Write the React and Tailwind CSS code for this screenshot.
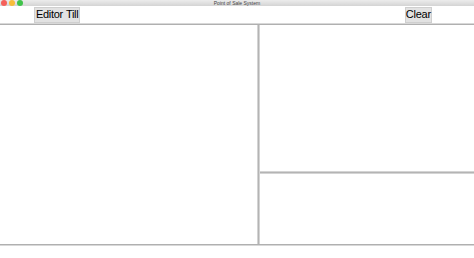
export default function App() {
  return (
    <div className="w-[474px] h-[258px] bg-white flex flex-col overflow-hidden" style={{ fontFamily: '"Liberation Sans", Arial, sans-serif' }}>
      {/* title bar */}
      <div className="relative h-[6px] bg-gradient-to-b from-[#ececec] to-[#d4d4d4] flex items-center">
        <div className="flex gap-[2px] pl-[1px]">
          <span className="w-[6px] h-[6px] rounded-full bg-[#f5605a]" />
          <span className="w-[6px] h-[6px] rounded-full bg-[#f8bd3a]" />
          <span className="w-[6px] h-[6px] rounded-full bg-[#3fc34a]" />
        </div>
        <div className="absolute inset-0 flex items-center justify-center text-[5px] leading-none text-[#444]">Point of Sale System</div>
      </div>
      {/* toolbar */}
      <div className="h-[17px] flex items-center pl-[34px] pr-[42px]">
        <div className="flex h-[16px] items-center bg-[#e2e2e2] border border-[#cfcfcf]">
          <button className="pl-[1px] pr-[3px] text-[11px] leading-none tracking-[-0.3px] text-black">Editor</button>
          <button className="pr-[1px] text-[11px] leading-none tracking-[-0.3px] text-black">Till</button>
        </div>
        <div className="flex-1" />
        <button className="h-[16px] px-0 bg-[#e2e2e2] border border-[#cfcfcf] text-[11px] leading-none tracking-[-0.2px] text-black">Clear</button>
      </div>
      {/* main */}
      <div className="h-[2px] bg-[#b0b0b0] border-t border-[#d8d8d8]" />
      <div className="flex h-[219px]">
        <div className="w-[257px] bg-white" />
        <div className="w-[3px] bg-[#b4b4b4] border-x border-[#d4d4d4]" />
        <div className="flex-1 flex flex-col">
          <div className="h-[146px] bg-white" />
          <div className="h-[3px] bg-[#b4b4b4] border-y border-[#d4d4d4]" />
          <div className="flex-1 bg-white" />
        </div>
      </div>
      <div className="h-[2px] bg-[#b0b0b0] border-b border-[#d8d8d8]" />
      <div className="flex-1 bg-white" />
    </div>
  );
}
